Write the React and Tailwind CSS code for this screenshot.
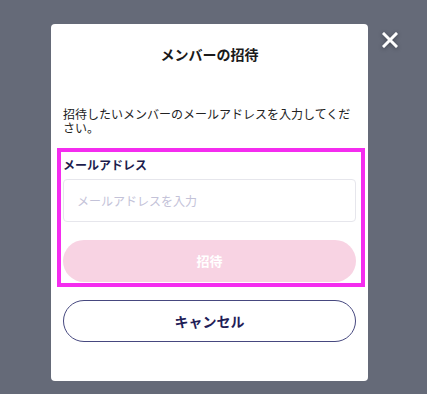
export default function App() {
  return (
    <div
      className="flex h-[394px] w-[427px] items-start justify-center bg-[#656a78] pt-[24px]"
      style={{ fontFamily: '"Noto Sans CJK JP", "Noto Sans", sans-serif' }}
    >
      {/* Modal */}
      <div className="ml-[-8px] w-[317px] rounded-[4px] bg-white px-3 pt-5 pb-[39px]">
        <h2 className="text-center text-[14px] font-bold leading-[20px] text-[#1a1a1a]">
          メンバーの招待
        </h2>
        <p className="mt-[43px] text-[12px] leading-[14px] text-[#222]">
          招待したいメンバーのメールアドレスを入力してください。
        </p>

        {/* Highlighted form */}
        <div className="mt-[13px] ml-[-6px] mr-[-9px] border-4 border-[#f42cef] pl-[2px] pr-[5px] pt-[5px] pb-[1px]">
          <label className="block text-[12px] font-bold leading-[16px] text-[#1c1c4c]">
            メールアドレス
          </label>
          <input
            type="email"
            placeholder="メールアドレスを入力"
            className="mt-[6px] h-[43px] w-full rounded-[4px] border border-[#e6e6ec] px-[13px] text-[12px] text-[#333] outline-none placeholder:text-[#c3c2d8]"
          />
          <button className="mt-[18px] flex h-[42px] w-full items-center justify-center rounded-full bg-[#f8d3e3] text-[13px] font-bold text-white">
            招待
          </button>
        </div>

        <button className="mt-[13px] flex h-[42px] w-full items-center justify-center rounded-full border border-[#46487f] bg-white text-[14px] font-bold text-[#1f2057]">
          キャンセル
        </button>
      </div>

      {/* Close */}
      <button className="absolute left-[381px] top-[31px] flex h-[17px] w-[17px] items-center justify-center drop-shadow-[0_1px_2px_rgba(0,0,0,0.35)]">
        <svg width="16" height="16" viewBox="0 0 16 16" fill="none">
          <path d="M2 2L14 14M14 2L2 14" stroke="white" strokeWidth="3" strokeLinecap="square" />
        </svg>
      </button>
    </div>
  )
}
